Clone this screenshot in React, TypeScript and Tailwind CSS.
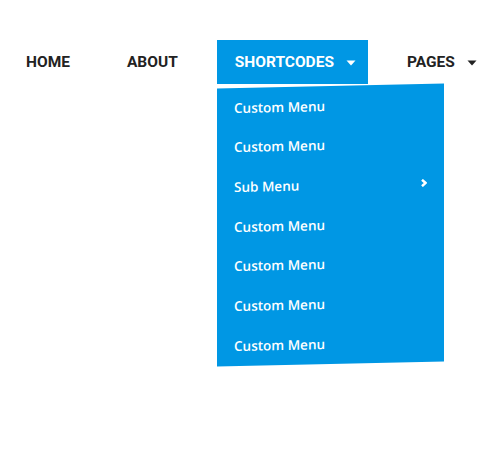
import { useState } from 'react'

const NAV = [
  { label: 'HOME', caret: false },
  { label: 'ABOUT', caret: false },
  { label: 'SHORTCODES', caret: true, active: true },
  { label: 'PAGES', caret: true },
]

const SUB_ITEMS = [
  'Custom Menu',
  'Custom Menu',
  'Sub Menu',
  'Custom Menu',
  'Custom Menu',
  'Custom Menu',
  'Custom Menu',
]

function Caret() {
  return (
    <svg width="10" height="6" viewBox="0 0 10 6" className="ml-3">
      <polygon points="0.5,0.5 9.5,0.5 5,5.5" fill="currentColor" />
    </svg>
  )
}

function AngleRight() {
  return (
    <svg width="6" height="8" viewBox="0 0 6 8">
      <polyline points="1,0.8 4.6,4 1,7.2" fill="none" stroke="currentColor" strokeWidth="2.5" />
    </svg>
  )
}

export default function App() {
  const [open] = useState(true)

  return (
    <div className="w-[500px] h-[472px] bg-white pt-10 font-['Roboto',sans-serif]">
      <nav className="flex items-stretch h-11 pl-2 gap-[21px]">
        {NAV.map(item => (
          <div key={item.label} className="relative">
            <a
              className={
                'flex h-11 items-center pt-[2px] pl-[18px] text-[15.5px] font-bold ' +
                (item.active ? 'bg-[#0097e4] text-white pr-3' : 'text-[#222] pr-[18px]')
              }
            >
              {item.label}
              {item.caret && <Caret />}
            </a>

            {item.active && open && (
              <ul className="absolute left-0 top-[46px] w-[227px] bg-[#0097e4] skew-y-[-1.25deg] font-['Open_Sans',sans-serif]">
                {SUB_ITEMS.map((sub, i) => (
                  <li
                    key={i}
                    className="flex h-[39.7px] items-center justify-between pl-[17px] pr-[17px] text-[13.5px] font-semibold text-white"
                  >
                    <span>{sub}</span>
                    {sub === 'Sub Menu' && <AngleRight />}
                  </li>
                ))}
              </ul>
            )}
          </div>
        ))}
      </nav>
    </div>
  )
}
